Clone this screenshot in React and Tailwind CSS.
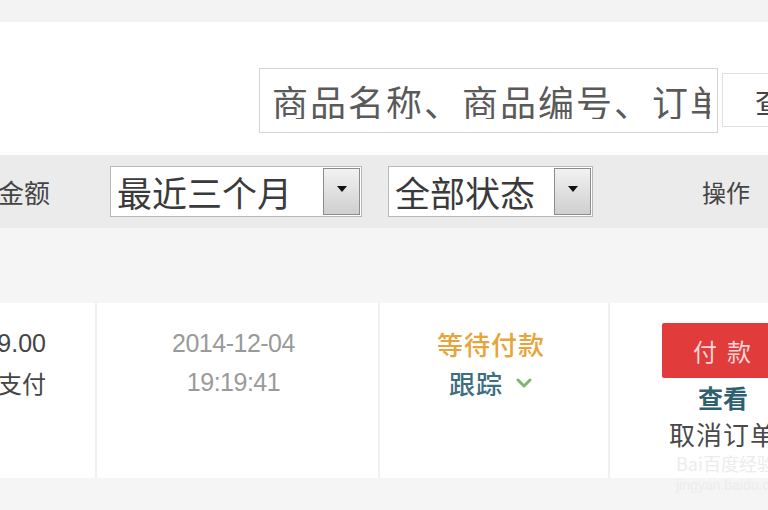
import React from "react";

const cjk = "font-['Noto_Sans_CJK_SC','Noto_Sans',sans-serif]";
const num = "font-['Liberation_Sans','Noto_Sans_CJK_SC',sans-serif]";

function SelectBox({ label, width }) {
  return (
    <div
      className={`flex h-[51px] items-stretch border border-[#b8b8b8] bg-white ${width}`}
    >
      <div className="flex flex-1 items-center overflow-hidden whitespace-nowrap pl-[6px] text-[35px] leading-none text-[#3a3a3a]">
        {label}
      </div>
      <div className="my-[1px] mr-[1px] flex w-[37px] items-center justify-center border border-[#8c8c8c] bg-gradient-to-b from-[#f2f2f2] to-[#cfcfcf]">
        <svg width="10" height="7" viewBox="0 0 10 7" className="-mt-[4px]">
          <path d="M0 0 L10 0 L5 6 Z" fill="#111" />
        </svg>
      </div>
    </div>
  );
}

export default function App() {
  return (
    <div
      className={`relative flex h-[510px] w-[768px] flex-col overflow-hidden bg-[#f4f4f4] ${cjk}`}
    >
      {/* top strip */}
      <div className="h-[22px] shrink-0 bg-[#f3f3f3]" />

      {/* search area */}
      <div className="flex h-[133px] shrink-0 items-start bg-white pt-[46px]">
        <div className="ml-[259px] flex h-[65px] w-[459px] shrink-0 items-center border border-[#d4d4d4] pl-[12px] pr-[7px]">
          <div className="overflow-hidden whitespace-nowrap text-[36px] leading-none tracking-[2px] text-[#5a5a5a]">
            商品名称、商品编号、订单号
          </div>
        </div>
        <div className="ml-[4px] mt-[5px] flex h-[54px] w-[110px] shrink-0 items-center overflow-hidden whitespace-nowrap border border-[#e0e0e0] pl-[32px] text-[30px] leading-none text-[#444]">
          查询
        </div>
      </div>

      {/* table header */}
      <div className="flex h-[73px] shrink-0 items-center bg-[#ebebeb]">
        <div className="flex w-[50px] shrink-0 justify-end whitespace-nowrap text-[26px] leading-none text-[#444]">
          金额
        </div>
        <div className="ml-[60px] shrink-0">
          <SelectBox label="最近三个月" width="w-[252px]" />
        </div>
        <div className="ml-[26px] shrink-0">
          <SelectBox label="全部状态" width="w-[205px]" />
        </div>
        <div className="ml-[109px] shrink-0 whitespace-nowrap text-[24px] leading-none text-[#444]">
          操作
        </div>
      </div>

      {/* spacer */}
      <div className="h-[75px] shrink-0 bg-[#f5f5f5]" />

      {/* order row */}
      <div className="flex h-[175px] shrink-0 bg-white">
        <div className="flex w-[97px] shrink-0 flex-col items-end border-r-2 border-[#f0f0f0] pr-[49px] pt-[21px]">
          <div className={`whitespace-nowrap text-[25px] leading-[39px] text-[#444] ${num}`}>
            ¥99.00
          </div>
          <div className="whitespace-nowrap text-[24px] leading-[39px] text-[#444]">
            在线支付
          </div>
        </div>

        <div className="flex w-[283px] shrink-0 flex-col items-center border-r-2 border-[#f0f0f0] pr-[8px] pt-[21px]">
          <div className={`whitespace-nowrap text-[25px] leading-[39px] tracking-[-0.5px] text-[#9a9a9a] ${num}`}>
            2014-12-04
          </div>
          <div className={`whitespace-nowrap text-[25px] leading-[39px] tracking-[-0.5px] text-[#9a9a9a] ${num}`}>
            19:19:41
          </div>
        </div>

        <div className="flex w-[230px] shrink-0 flex-col items-center border-r-2 border-[#f0f0f0] pr-[6px] pt-[21px]">
          <div className="whitespace-nowrap text-[26px] font-medium leading-[39px] tracking-[1px] text-[#e7a43a]">
            等待付款
          </div>
          <div className="flex items-center gap-[12px] text-[26px] font-medium leading-[39px] tracking-[1px] text-[#3d6e7f]">
            <span>跟踪</span>
            <svg width="18" height="10" viewBox="0 0 18 10">
              <path
                d="M3 2 L9 8 L15 2"
                fill="none"
                stroke="#7db56a"
                strokeWidth="3"
                strokeLinecap="round"
                strokeLinejoin="round"
              />
            </svg>
          </div>
        </div>

        <div className="flex w-[226px] shrink-0 flex-col items-center pt-[20px]">
          <div className="flex h-[55px] w-[122px] shrink-0 items-center justify-center rounded-[2px] bg-[#e23b3b] pl-[8px] text-[24px] leading-none tracking-[10px] text-[#f8d6d6]">
            付款
          </div>
          <div className="whitespace-nowrap text-[25px] font-bold leading-[38px] text-[#2f6070]">
            查看
          </div>
          <div className="whitespace-nowrap text-[26px] leading-[36px] tracking-[1px] text-[#4a4a4a]">
            取消订单
          </div>
        </div>
      </div>

      {/* bottom */}
      <div className="flex-1 bg-[#f5f5f5]" />

      {/* faint watermark */}
      <div className="absolute left-[676px] top-[452px] flex flex-col text-[18px] leading-[22px] text-[#ececec]">
        <span>Bai百度经验</span>
        <span className={`text-[14px] ${num}`}>jingyan.baidu.com</span>
      </div>
    </div>
  );
}
